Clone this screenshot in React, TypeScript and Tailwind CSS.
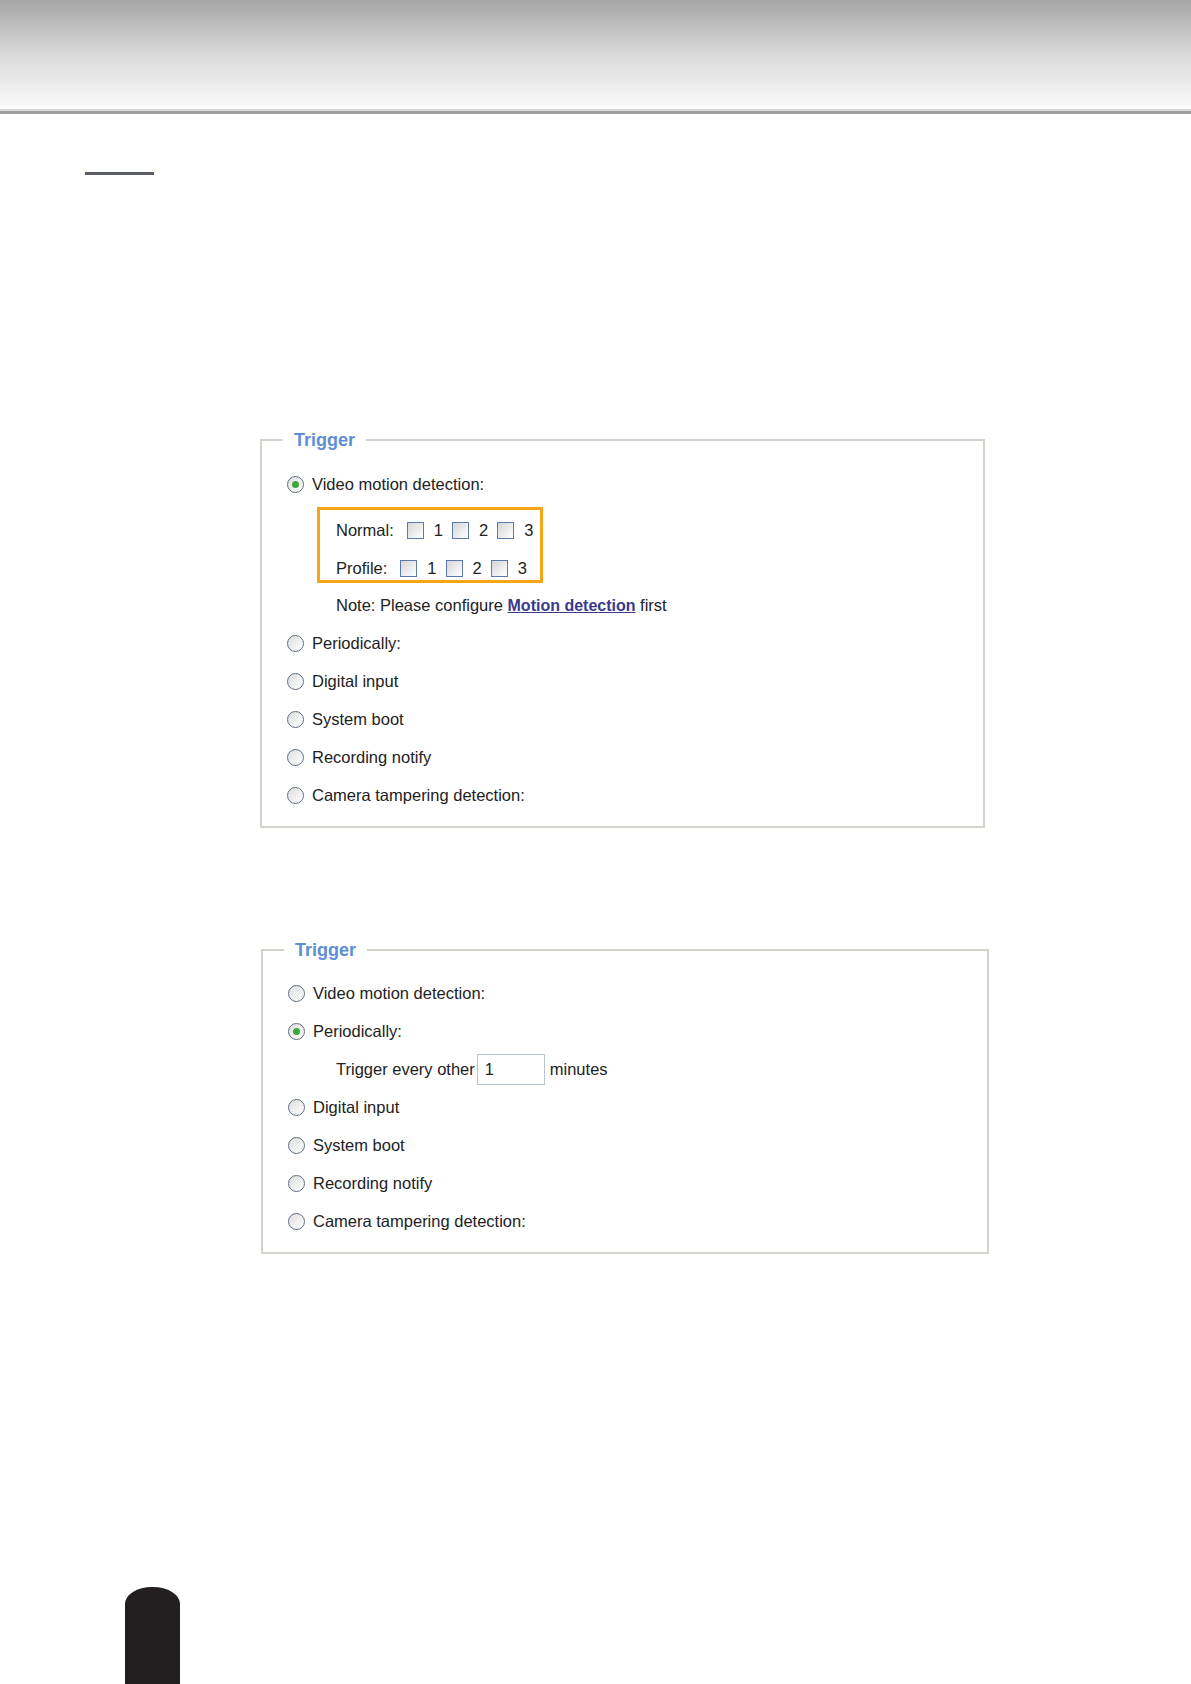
import React from "react";

const font = { fontFamily: '"Liberation Sans", Arial, sans-serif' };

function Radio({ checked = false }: { checked?: boolean }) {
  return (
    <span className="flex h-[17px] w-[17px] shrink-0 items-center justify-center rounded-full border border-[#5f6d80] bg-gradient-to-br from-[#dedede] to-white">
      {checked && <span className="h-[7px] w-[7px] rounded-full bg-[#3ca83c]" />}
    </span>
  );
}

function Box() {
  return <span className="block h-[17px] w-[17px] shrink-0 border border-[#5b7aa8] bg-gradient-to-br from-[#d6d6d6] to-white" />;
}

function Option({ label, checked }: { label: string; checked?: boolean }) {
  return (
    <div className="flex h-[38px] items-center gap-[8px]">
      <Radio checked={checked} />
      <span>{label}</span>
    </div>
  );
}

function CheckRow({ label }: { label: string }) {
  return (
    <div className="flex h-[24px] items-center">
      <span>{label}</span>
      {["1", "2", "3"].map((n, i) => (
        <React.Fragment key={n}>
          <span className={i === 0 ? "ml-[13px]" : "ml-[9px]"}>
            <Box />
          </span>
          <span className="ml-[10px]">{n}</span>
        </React.Fragment>
      ))}
    </div>
  );
}

function Legend() {
  return (
    <legend className="ml-[21px] px-[11px] text-[18px] font-bold leading-[20px] text-[#5c8fd6]">
      Trigger
    </legend>
  );
}

export default function App() {
  return (
    <div className="flex h-[1684px] w-[1191px] flex-col overflow-hidden bg-white text-[16.5px] text-[#222]" style={font}>
      {/* page header */}
      <div className="h-[109px] bg-gradient-to-b from-[#a6a6a6] via-[#dadada] to-[#fbfbfb]" />
      <div className="h-[2px] bg-[#d6d6d6]" />
      <div className="h-[3px] bg-[#9f9f9f]" />

      <div className="ml-[85px] mt-[58px] h-[3px] w-[69px] bg-[#5a5c66]" />

      {/* trigger: video motion detection */}
      <fieldset className="ml-[260px] mt-[255px] w-[725px] border-2 border-[#d3d3cc]">
        <Legend />
        <div className="pb-[12px] pl-[25px] pt-[15px]">
          <Option label="Video motion detection:" checked />
          <div className="ml-[30px] mt-[4px] w-[226px] border-[3px] border-[#f6a514] pl-[16px] pt-[8px]">
            <CheckRow label="Normal:" />
            <div className="mt-[14px]">
              <CheckRow label="Profile:" />
            </div>
          </div>
          <div className="ml-[49px] mt-[3px] flex h-[38px] items-center">
            <span>
              Note: Please configure{" "}
              <span className="text-[16px] font-bold text-[#3a3a8c] underline">Motion detection</span> first
            </span>
          </div>
          <Option label="Periodically:" />
          <Option label="Digital input" />
          <Option label="System boot" />
          <Option label="Recording notify" />
          <Option label="Camera tampering detection:" />
        </div>
      </fieldset>

      {/* trigger: periodically */}
      <fieldset className="ml-[261px] mt-[112px] w-[728px] border-2 border-[#d3d3cc]">
        <Legend />
        <div className="pb-[12px] pl-[25px] pt-[14px]">
          <Option label="Video motion detection:" />
          <Option label="Periodically:" checked />
          <div className="ml-[48px] flex h-[38px] items-center">
            <span>Trigger every other</span>
            <span className="ml-[2px] flex h-[31px] w-[68px] items-center border border-[#b9c4d6] pl-[7px]">1</span>
            <span className="ml-[5px]">minutes</span>
          </div>
          <Option label="Digital input" />
          <Option label="System boot" />
          <Option label="Recording notify" />
          <Option label="Camera tampering detection:" />
        </div>
      </fieldset>

      {/* page tab */}
      <div className="ml-[125px] mt-auto h-[97px] w-[55px] rounded-[27px_27px_0_0/17px_17px_0_0] bg-[#231f20]" />
    </div>
  );
}
